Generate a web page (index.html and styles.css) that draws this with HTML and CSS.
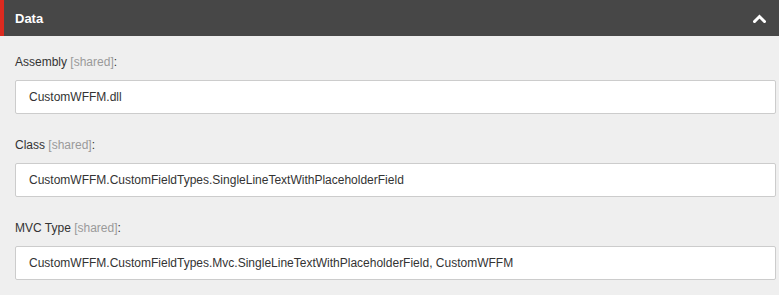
FILE: index.html
```html
<!DOCTYPE html>
<html>
<head>
<meta charset="utf-8">
<link rel="stylesheet" href="styles.css">
</head>
<body>
<div class="section">
  <div class="section-header">
    <span class="section-title">Data</span>
    <svg class="chevron" width="13" height="9" viewBox="0 0 13 9"><path d="M1.5 7.5 L6.5 2.5 L11.5 7.5" fill="none" stroke="#fff" stroke-width="3" stroke-linecap="square"/></svg>
  </div>
  <div class="section-body">
    <div class="field">
      <div class="field-label">Assembly <span class="shared">[shared]</span>:</div>
      <div class="field-input">CustomWFFM.dll</div>
    </div>
    <div class="field">
      <div class="field-label">Class <span class="shared">[shared]</span>:</div>
      <div class="field-input">CustomWFFM.CustomFieldTypes.SingleLineTextWithPlaceholderField</div>
    </div>
    <div class="field">
      <div class="field-label">MVC Type <span class="shared">[shared]</span>:</div>
      <div class="field-input">CustomWFFM.CustomFieldTypes.Mvc.SingleLineTextWithPlaceholderField, CustomWFFM</div>
    </div>
  </div>
</div>
</body>
</html>
```

FILE: styles.css
```css
html, body {
  margin: 0;
  padding: 0;
  background: #efefef;
  font-family: "Liberation Sans", Arial, sans-serif;
  font-size: 12px;
  color: #333;
}
.section-header {
  height: 36px;
  background: #474747;
  border-left: 4px solid #dc2a1f;
  display: flex;
  align-items: center;
  justify-content: space-between;
  padding: 0 13px 0 11px;
  box-sizing: border-box;
}
.section-title {
  color: #fff;
  font-weight: bold;
  font-size: 13px;
}
.chevron {
  display: block;
}
.section-body {
  padding: 18px 3px 0 15px;
  display: flex;
  flex-direction: column;
  gap: 23px;
}
.field-label {
  line-height: 16px;
  margin-bottom: 10px;
  color: #333;
}
.shared {
  color: #9a9a9a;
}
.field-input {
  height: 34px;
  box-sizing: border-box;
  background: #fff;
  border: 1px solid #ccc;
  border-radius: 2px;
  padding: 0 13px;
  line-height: 32px;
  color: #333;
  white-space: nowrap;
}
```
